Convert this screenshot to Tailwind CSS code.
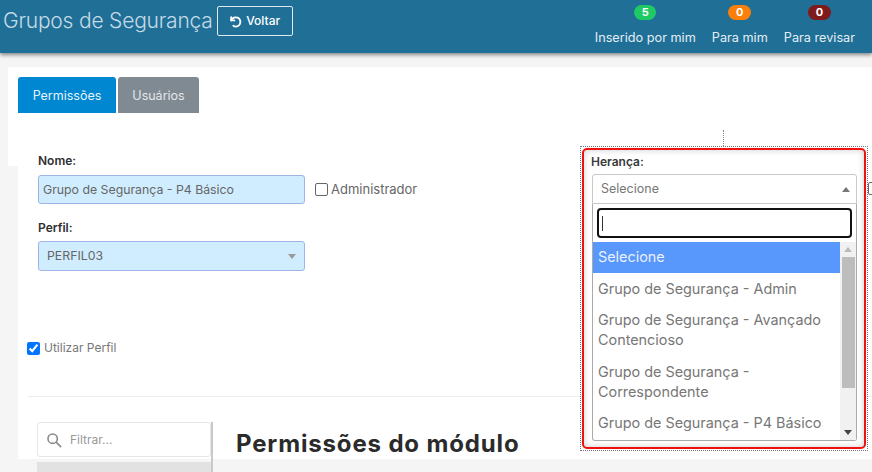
<!DOCTYPE html>
<html lang="en">
<head>
  <meta charset="UTF-8">
  <title>Grupos de Segurança</title>
  <script src="https://cdn.jsdelivr.net/npm/@tailwindcss/browser@4"></script>
</head>
<body class="relative w-[872px] h-[472px] overflow-hidden bg-[#f5f5f5] font-['Inter','Open_Sans',sans-serif] text-[#555]">
  <!-- Header -->
  <header class="h-[53px] bg-[#206f97] shadow-[0_2px_4px_rgba(0,0,0,0.45)] flex justify-between pl-[3px] pr-[17px]">
    <div class="flex items-start pt-[6px]">
      <h1 class="text-[21px] leading-[30px] font-light text-[#c4dbe6] tracking-[-0.2px]">Grupos de Segurança</h1>
      <button class="ml-[4px] w-[76px] h-[30px] border border-[#dfeaf0] rounded-[2px] flex items-center justify-center gap-[4px] text-white text-[12px] font-medium">
        <svg width="13" height="13" viewBox="0 0 24 24" fill="none" stroke="white" stroke-width="3.4" stroke-linecap="round" stroke-linejoin="round"><path d="M4 4v6h6"/><path d="M4.5 10A8.5 8.5 0 1 1 8 20"/></svg>
        Voltar
      </button>
    </div>
    <div class="flex gap-[16px] pt-[5px] text-[12.7px] text-[#e3eef3]">
      <div class="flex flex-col items-center">
        <span class="w-[22px] h-[15px] rounded-full bg-[#1fc966] text-white text-[11px] font-bold leading-[15px] text-center">5</span>
        <span class="mt-[9px] leading-[18px]">Inserido por mim</span>
      </div>
      <div class="flex flex-col items-center">
        <span class="w-[23px] h-[15px] rounded-full bg-[#fb7f08] text-white text-[11px] font-bold leading-[15px] text-center">0</span>
        <span class="mt-[9px] leading-[18px]">Para mim</span>
      </div>
      <div class="flex flex-col items-center">
        <span class="w-[23px] h-[15px] rounded-full bg-[#7f1a1d] text-white text-[11px] font-bold leading-[15px] text-center">0</span>
        <span class="mt-[9px] leading-[18px]">Para revisar</span>
      </div>
    </div>
  </header>

  <!-- Tabs panel -->
  <section class="mt-[14px] ml-[8px] h-[99px] bg-white pl-[10px] pt-[10px] flex gap-[2px] items-start">
    <button class="w-[98px] h-[36px] pt-[2px] rounded-t-[3px] bg-[#0087d1] text-[#e6f3fa] text-[12.5px]">Permissões</button>
    <button class="w-[81px] h-[36px] pt-[2px] rounded-t-[3px] bg-[#7f8a93] text-[#e4e7ea] text-[12.5px]">Usuários</button>
  </section>

  <!-- Form panel -->
  <main class="ml-[18px] h-[306px] bg-white relative">
    <div class="pl-[20px] -mt-[13px] relative">
      <label class="block text-[12px] leading-[16px] font-semibold text-[#2f2f2f]">Nome:</label>
      <div class="mt-[6px] flex items-center">
        <div class="w-[267px] h-[29px] rounded-[3px] border border-[#9fb4e4] bg-[#d0edff] pl-[4px] text-[12.3px] leading-[27px] text-[#666]">Grupo de Segurança - P4 Básico</div>
        <span class="ml-[10px] w-[13px] h-[13px] rounded-[2px] border border-[#666] bg-white"></span>
        <span class="ml-[3px] text-[13px] text-[#666]">Administrador</span>
      </div>
      <label class="block mt-[16px] text-[12px] leading-[16px] font-semibold text-[#2f2f2f]">Perfil:</label>
      <div class="mt-[5px] w-[267px] h-[30px] rounded-[3px] border border-[#9fb4e4] bg-[#d0edff] pl-[8px] pr-[8px] flex items-center justify-between text-[12.3px] text-[#666]">
        PERFIL03
        <span class="w-0 h-0 border-x-[4px] border-x-transparent border-t-[5px] border-t-[#999]"></span>
      </div>
    </div>
    <div class="pl-[9px] mt-[68px] flex items-center gap-[4px] text-[12px] text-[#777]">
      <input type="checkbox" checked class="w-[13px] h-[13px] accent-[#0075ff]">
      Utilizar Perfil
    </div>
    <hr class="ml-[10px] mt-[39px] border-[#eeeeee]">
    <div class="pl-[19px] mt-[25px] flex">
      <div class="w-[176px] border-r-2 border-[#c9c9c9] h-[60px]">
        <div class="h-[35px] border border-[#e6e6e6] rounded-[3px] flex items-center pl-[8px] gap-[8px] text-[12px] text-[#999]">
          <svg width="16" height="16" viewBox="0 0 24 24" fill="none" stroke="#8a8a8a" stroke-width="2.4" stroke-linecap="round"><circle cx="10" cy="10" r="7"/><path d="M15.5 15.5L22 22"/></svg>
          Filtrar...
        </div>
        <div class="mt-[5px] h-[20px] bg-[#e2e2e2]"></div>
      </div>
      <h2 class="ml-[23px] mt-[8px] text-[24px] leading-[28px] font-bold text-[#2b2b2b] tracking-[0.85px]">Permissões do módulo</h2>
    </div>
  </main>

  <!-- Annotated Herança dropdown, drawn over the form -->
  <div class="absolute left-[723px] top-[130px] h-[16px] border-l border-dotted border-[#888]"></div>
  <span class="absolute left-[868px] top-[182px] w-[13px] h-[13px] rounded-[2px] border border-[#666] bg-white"></span>
  <div class="absolute left-[580px] top-[146px] w-[288px] h-[305px] border border-dotted border-[#777] p-px">
    <div class="w-full h-full border-2 border-[#f01010] rounded-[5px] bg-white pl-[8px] pr-[7px] pt-[4px] shadow-[inset_0_0_6px_rgba(0,0,0,0.2)]">
      <div class="text-[12px] leading-[16px] font-semibold text-[#3a3a3a] -ml-px">Herança:</div>
      <div class="mt-[4px] h-[30px] rounded-t-[3px] border border-[#c8c8c8] flex items-center justify-between pl-[8px] pr-[6px] text-[12.5px] text-[#777]">
        Selecione
        <span class="w-0 h-0 border-x-[4px] border-x-transparent border-b-[5px] border-b-[#777]"></span>
      </div>
      <div class="h-[237px] border border-t-0 border-[#aaa] rounded-b-[3px] flex flex-col">
        <div class="px-[4px] pt-[4px] pb-[4px]">
          <div class="h-[30px] border-2 border-[#111] rounded-[4px] bg-white flex items-center pl-[3px]">
            <span class="w-px h-[15px] bg-[#333]"></span>
          </div>
        </div>
        <div class="flex flex-1 min-h-0">
          <ul class="w-[247px] text-[14.4px] leading-[20px] text-[#777]">
            <li class="h-[31px] bg-[#5897fb] text-[#e8f1ff] px-[5px] pt-[5px]">Selecione</li>
            <li class="h-[31px] px-[5px] pt-[6px]">Grupo de Segurança - Admin</li>
            <li class="h-[51px] px-[5px] pt-[6px]">Grupo de Segurança - Avançado Contencioso</li>
            <li class="h-[52px] px-[5px] pt-[7px]">Grupo de Segurança - Correspondente</li>
            <li class="h-[32px] px-[5px] pt-[6px]">Grupo de Segurança - P4 Básico</li>
          </ul>
          <div class="w-[16px] bg-[#f1f1f1] flex flex-col items-center">
            <span class="mt-[5px] w-0 h-0 border-x-[4px] border-x-transparent border-b-[5px] border-b-[#bbb]"></span>
            <span class="mt-[5px] w-[13px] h-[131px] bg-[#bdbdbd]"></span>
            <span class="mt-auto mb-[5px] w-0 h-0 border-x-[4px] border-x-transparent border-t-[5px] border-t-[#444]"></span>
          </div>
        </div>
      </div>
    </div>
  </div>
</body>
</html>
